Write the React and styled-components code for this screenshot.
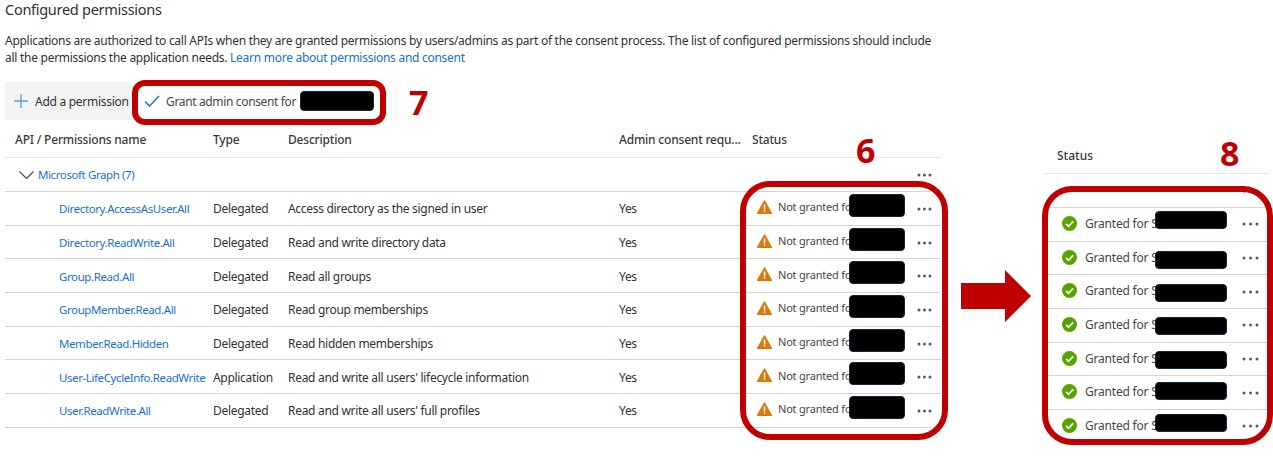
import React from "react";
import styled, { createGlobalStyle } from "styled-components";

const permissions = [
  { name: "Directory.AccessAsUser.All", type: "Delegated", desc: "Access directory as the signed in user" },
  { name: "Directory.ReadWrite.All", type: "Delegated", desc: "Read and write directory data" },
  { name: "Group.Read.All", type: "Delegated", desc: "Read all groups" },
  { name: "GroupMember.Read.All", type: "Delegated", desc: "Read group memberships" },
  { name: "Member.Read.Hidden", type: "Delegated", desc: "Read hidden memberships" },
  { name: "User-LifeCycleInfo.ReadWrite", type: "Application", desc: "Read and write all users' lifecycle information" },
  { name: "User.ReadWrite.All", type: "Delegated", desc: "Read and write all users' full profiles" },
];

// black boxes over the tenant name, offsets relative to each status row
const rightMasks = [3, 9, 9, 8, 8, 6, 4];

const GlobalStyle = createGlobalStyle`
  html, body {
    margin: 0;
    background: #fff;
  }
  body {
    font-family: "Noto Sans", "Open Sans", sans-serif;
    color: #323130;
  }
  * { box-sizing: border-box; }
`;

const Page = styled.div`
  position: relative;
  display: flex;
  width: 1273px;
  height: 459px;
  overflow: hidden;
`;

const LeftPanel = styled.section`
  width: 936px;
  margin-left: 5px;
  flex: none;
`;

const Title = styled.h2`
  margin: 0;
  font-size: 14.5px;
  line-height: 18px;
  font-weight: 400;
  letter-spacing: -0.28px;
`;

const Intro = styled.p`
  margin: 14px 0 16px;
  font-size: 12px;
  line-height: 17px;
  letter-spacing: -0.27px;
  white-space: nowrap;
`;

const Link = styled.a`
  color: #1a6fd0;
`;

const Toolbar = styled.div`
  position: relative;
  display: flex;
  align-items: center;
  height: 38px;
`;

const AddButton = styled.div`
  display: flex;
  align-items: center;
  gap: 7px;
  width: 127px;
  height: 100%;
  padding-left: 9px;
  background: #f3f3f3;
  font-size: 12px;
  letter-spacing: -0.28px;
  white-space: nowrap;
`;

const GrantButton = styled.div`
  display: flex;
  align-items: center;
  gap: 6px;
  padding-left: 12px;
  font-size: 12px;
  letter-spacing: -0.35px;
  color: #484644;
  white-space: nowrap;
`;

const Row = styled.div`
  display: grid;
  grid-template-columns: 198px 75px 331px 133px 1fr;
  align-items: center;
  height: ${(p) => p.$height || 33.7}px;
  padding: 1px 0 0 10px;
  border-bottom: 1px solid ${(p) => p.$line || "#d4d4d4"};
  font-size: 12px;
  letter-spacing: -0.3px;
  white-space: nowrap;
`;

const HeadCell = styled.div`
  font-weight: 500;
  color: #3b3a39;
  letter-spacing: -0.2px;
`;

const NameCell = styled(Link)`
  padding-left: 44px;
  font-size: 11.5px;
  letter-spacing: -0.4px;
`;

const GroupRow = styled.div`
  display: flex;
  align-items: center;
  justify-content: ${(p) => (p.$end ? "flex-end" : "space-between")};
  height: 34px;
  padding: 0 ${(p) => p.$right}px 0 14px;
  border-bottom: 1px solid #d4d4d4;
  font-size: 11.5px;
  letter-spacing: -0.4px;
`;

const GroupName = styled.div`
  display: flex;
  align-items: center;
  gap: 4px;
`;

const StatusBox = styled.div`
  position: relative;
  display: flex;
  align-items: center;
  gap: ${(p) => p.$gap}px;
  height: 100%;
  padding-left: ${(p) => p.$pad}px;
  padding-bottom: ${(p) => p.$lift}px;
`;

const StatusText = styled.span`
  color: #484644;
  font-size: ${(p) => p.$size}px;
  letter-spacing: -0.2px;
`;

const Mask = styled.div`
  position: absolute;
  left: ${(p) => p.$left}px;
  top: ${(p) => p.$top}px;
  width: ${(p) => p.$width}px;
  height: ${(p) => p.$height}px;
  background: #000;
  border: 1px solid #0c2a3a;
  border-radius: 4px;
`;

const More = styled.svg`
  position: absolute;
  left: ${(p) => p.$left}px;
  top: 50%;
  margin-top: -3px;
`;

const ArrowSlot = styled.div`
  flex: none;
  width: 103px;
  padding: 270px 0 0 20px;
`;

const RightPanel = styled.section`
  width: 225px;
  flex: none;
  padding-top: 138px;
`;

const RightHead = styled.div`
  display: flex;
  align-items: center;
  height: 36px;
  padding-left: 13px;
  border-bottom: 1px solid #e6e6e6;
  font-size: 12px;
  font-weight: 500;
  color: #3b3a39;
`;

const RightRow = styled.div`
  height: 33.7px;
  border-bottom: 1px solid ${(p) => (p.$last ? "transparent" : "#d4d4d4")};
  white-space: nowrap;
`;

const Callout = styled.div`
  position: absolute;
  left: ${(p) => p.$left}px;
  top: ${(p) => p.$top}px;
  width: ${(p) => p.$width}px;
  height: ${(p) => p.$height}px;
  border: 6px solid #c00000;
  border-radius: ${(p) => p.$radius}px;
  pointer-events: none;
`;

const StepNumber = styled.div`
  position: absolute;
  left: ${(p) => p.$left}px;
  top: ${(p) => p.$top}px;
  font-family: "Open Sans", sans-serif;
  font-size: 34px;
  line-height: 36px;
  font-weight: 700;
  color: #c00000;
`;

const DotsWrap = styled.div`
  position: relative;
  width: ${(p) => p.$width}px;
  height: 6px;
`;

const Plus = () => (
  <svg width="14" height="14" viewBox="0 0 14 14" fill="none" stroke="#5f9fd6" strokeWidth="1.3">
    <path d="M7 0v14M0 7h14" />
  </svg>
);

const Check = () => (
  <svg width="16" height="12" viewBox="0 0 16 12" fill="none" stroke="#1a78c8" strokeWidth="1.5">
    <path d="M1 6.5l4.5 4.5L15 1" />
  </svg>
);

const Chevron = () => (
  <svg width="15" height="8" viewBox="0 0 15 8" fill="none" stroke="#444" strokeWidth="1.1">
    <path d="M0.5 0.5L7.5 7.5L14.5 0.5" />
  </svg>
);

const Warning = () => (
  <svg width="15" height="14" viewBox="0 0 15 14" style={{ flex: "none" }}>
    <path d="M7.5 0.5L14.8 13.5H0.2Z" fill="#e0760a" stroke="#e0760a" strokeLinejoin="round" />
    <path d="M6.8 4.5h1.5v5H6.8zM6.8 10.3h1.5v1.5H6.8z" fill="#fff" />
  </svg>
);

const Granted = () => (
  <svg width="15" height="15" viewBox="0 0 15 15" style={{ flex: "none" }}>
    <circle cx="7.5" cy="7.5" r="7.5" fill="#57a300" />
    <path d="M4 7.8l2.5 2.5L11.2 5.3" fill="none" stroke="#fff" strokeWidth="1.7" />
  </svg>
);

const Dots = ({ left, size = 15 }) => (
  <More $left={left} width={size} height="6" viewBox={`0 0 ${size} 6`} fill="#5a5a5a">
    <circle cx="2" cy="3" r="1.5" />
    <circle cx={size / 2} cy="3" r="1.5" />
    <circle cx={size - 2} cy="3" r="1.5" />
  </More>
);

const Arrow = () => (
  <svg width="70" height="52" viewBox="0 0 70 52" fill="#c00000">
    <path d="M0 13h44V0l26 26-26 26V39H0z" />
  </svg>
);

const App = () => (
  <Page>
    <GlobalStyle />
    <LeftPanel>
      <Title>Configured permissions</Title>
      <Intro>
        Applications are authorized to call APIs when they are granted permissions by users/admins as part of the consent process. The list of configured permissions should include
        <br />
        all the permissions the application needs. <Link>Learn more about permissions and consent</Link>
      </Intro>
      <Toolbar>
        <AddButton>
          <Plus />
          Add a permission
        </AddButton>
        <GrantButton>
          <Check />
          Grant admin consent for
        </GrantButton>
        <Mask $left={295} $top={9} $width={74} $height={20} />
      </Toolbar>
      <Row $height={38} $line="#e6e6e6">
        <HeadCell>API / Permissions name</HeadCell>
        <HeadCell>Type</HeadCell>
        <HeadCell>Description</HeadCell>
        <HeadCell>Admin consent requ...</HeadCell>
        <HeadCell>Status</HeadCell>
      </Row>
      <GroupRow $right={9}>
        <GroupName>
          <Chevron />
          <Link>Microsoft Graph (7)</Link>
        </GroupName>
        <DotsWrap $width={15}>
          <Dots left={0} />
        </DotsWrap>
      </GroupRow>
      {permissions.map((p) => (
        <Row key={p.name}>
          <NameCell>{p.name}</NameCell>
          <span>{p.type}</span>
          <span>{p.desc}</span>
          <span>Yes</span>
          <StatusBox $pad={5} $gap={6} $lift={4}>
            <Warning />
            <StatusText $size={11}>Not granted for</StatusText>
            <Mask $left={97} $top={1} $width={56} $height={23} />
            <Dots left={165} />
          </StatusBox>
        </Row>
      ))}
    </LeftPanel>
    <ArrowSlot>
      <Arrow />
    </ArrowSlot>
    <RightPanel>
      <RightHead>Status</RightHead>
      <GroupRow $right={10} $end>
        <DotsWrap $width={17}>
          <Dots left={0} size={17} />
        </DotsWrap>
      </GroupRow>
      {rightMasks.map((top, i) => (
        <RightRow key={i} $last={i === rightMasks.length - 1}>
          <StatusBox $pad={18} $gap={8} $lift={2}>
            <Granted />
            <StatusText $size={12}>Granted for S</StatusText>
            <Mask $left={111} $top={top} $width={72} $height={18} />
            <Dots left={198} size={17} />
          </StatusBox>
        </RightRow>
      ))}
    </RightPanel>
    <Callout $left={132} $top={80} $width={254} $height={45} $radius={13} />
    <Callout $left={740} $top={181} $width={208} $height={259} $radius={30} />
    <Callout $left={1042} $top={186} $width={231} $height={259} $radius={30} />
    <StepNumber $left={409} $top={84}>7</StepNumber>
    <StepNumber $left={856} $top={132}>6</StepNumber>
    <StepNumber $left={1220} $top={135}>8</StepNumber>
  </Page>
);

export default App;
